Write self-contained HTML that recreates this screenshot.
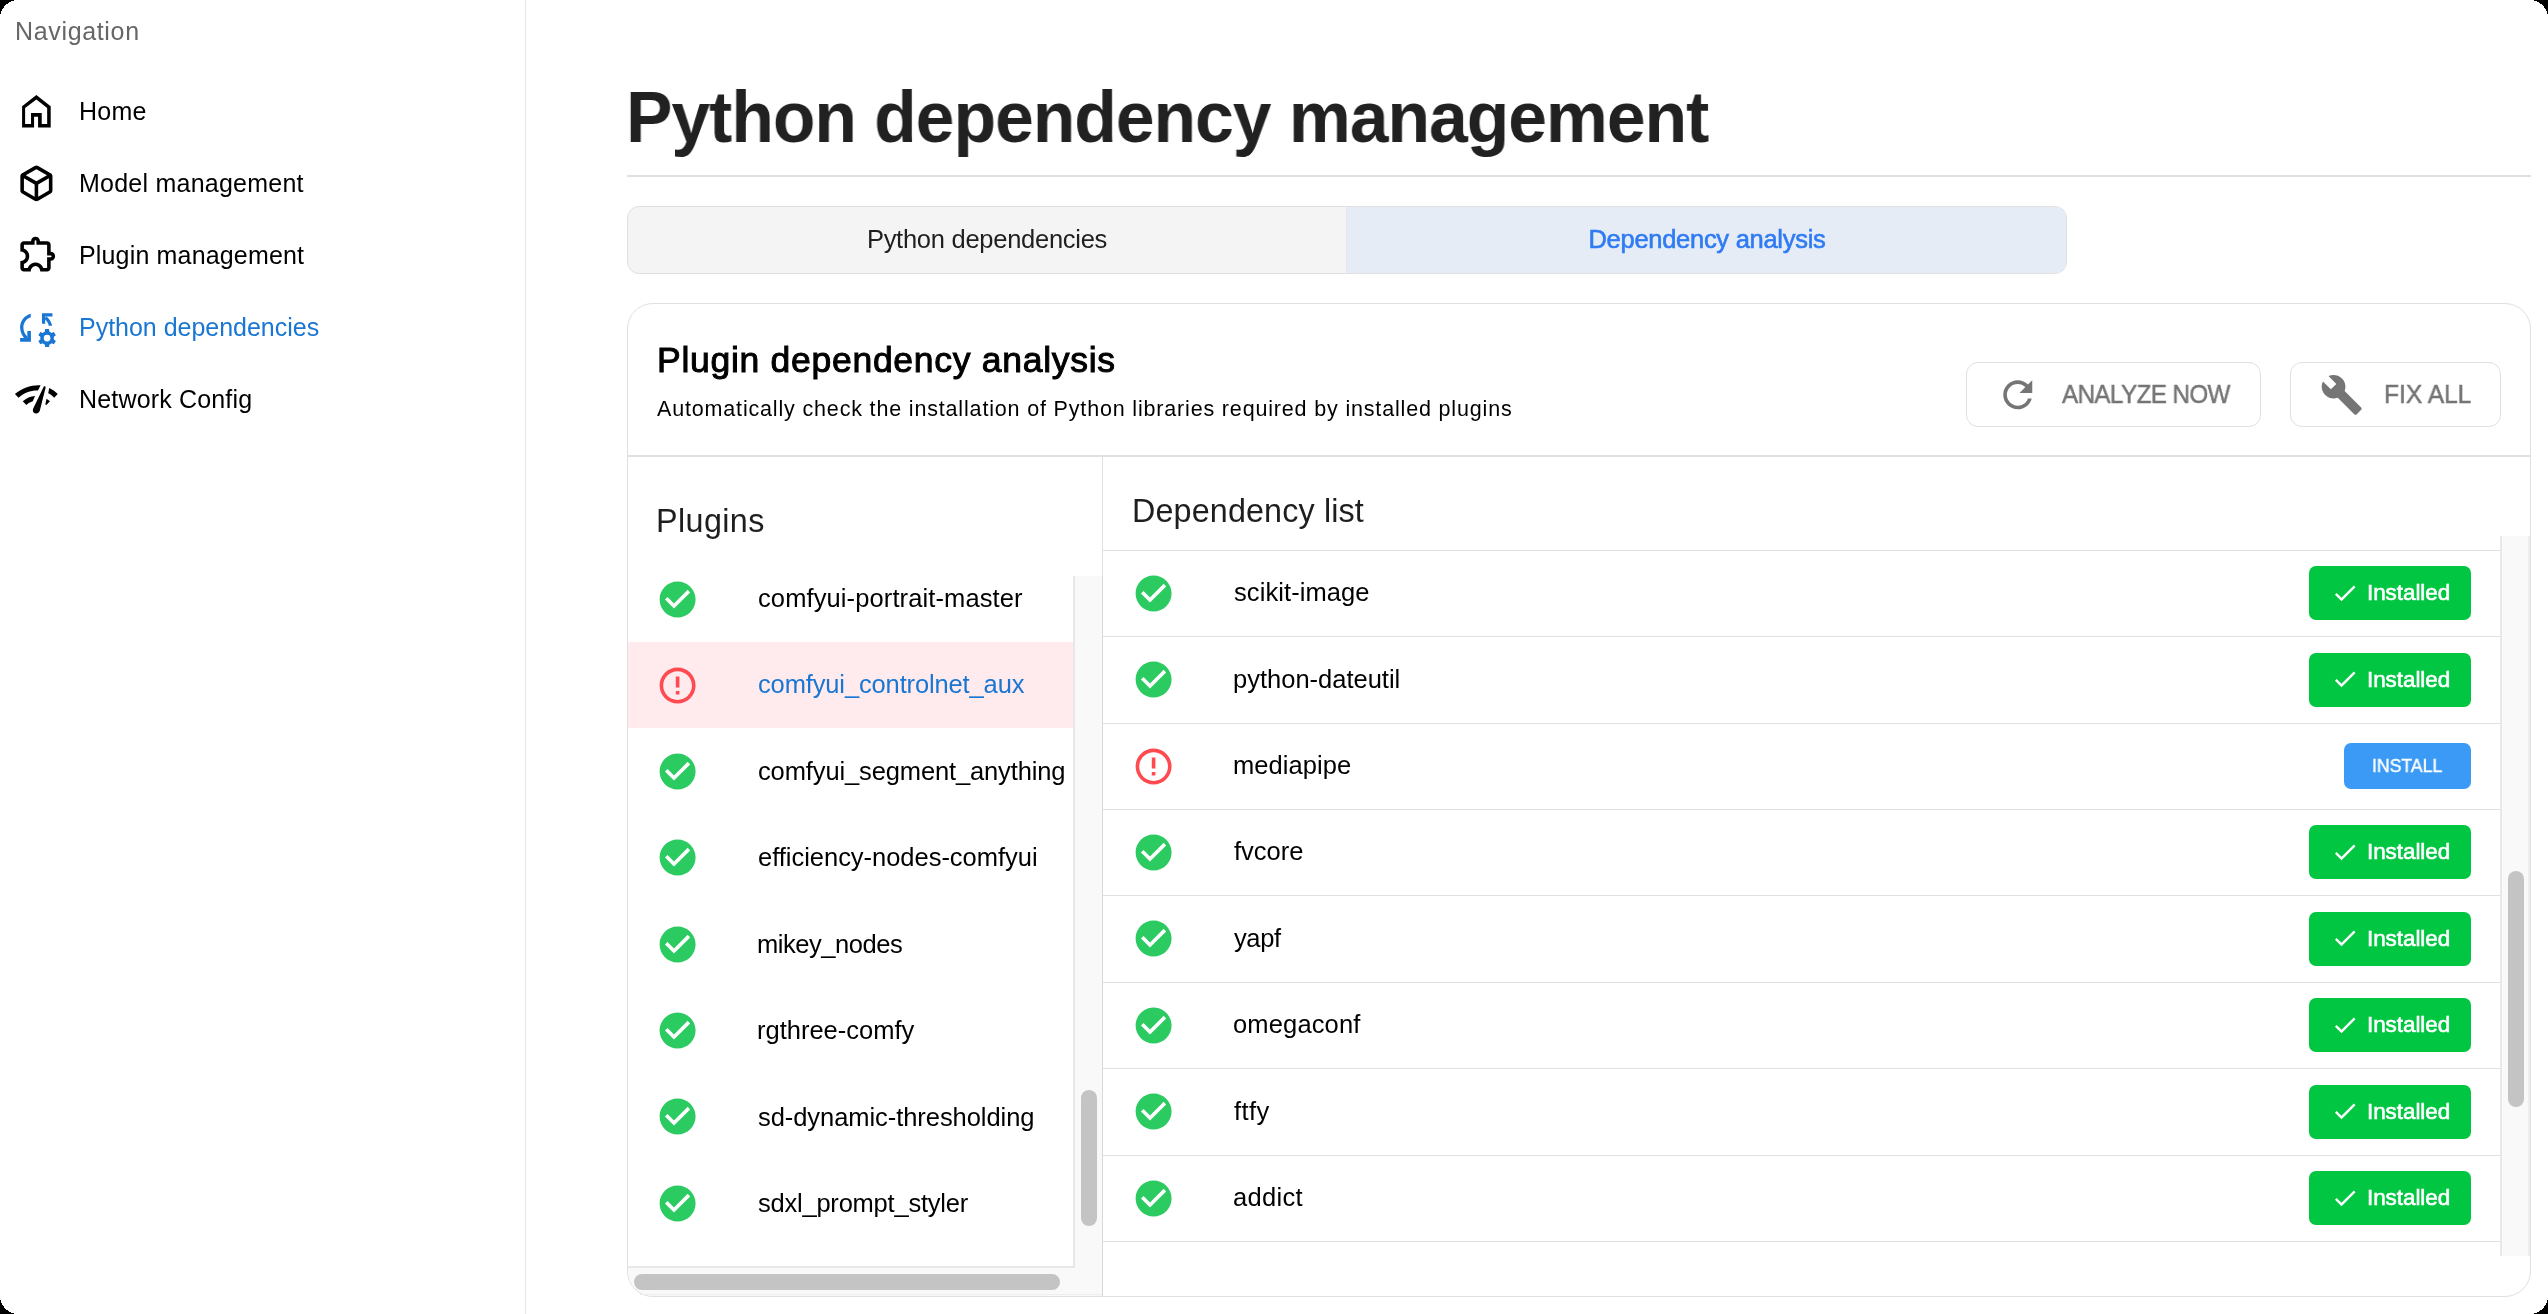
<!DOCTYPE html>
<html><head><meta charset="utf-8"><title>Python dependency management</title>
<style>
html,body{margin:0;padding:0;background:#000;width:2548px;height:1314px;overflow:hidden}
.app{position:absolute;left:0;top:0;width:2548px;height:1314px;background:#fff;overflow:hidden;font-family:"Liberation Sans",sans-serif}
.t{position:absolute;white-space:nowrap;font-family:"Liberation Sans",sans-serif;will-change:transform}
.r{position:absolute}
.i{position:absolute;overflow:visible}
</style></head><body><div class="app">
<div class="r" style="left:525px;top:0px;width:1px;height:1314px;background:#e5e5e5;"></div>
<div class="t" style="left:14.55px;top:18.64px;font-size:25px;line-height:25px;color:#666666;font-weight:400;letter-spacing:0.656px;">Navigation</div>
<svg class="i" style="left:0;top:0" width="60" height="140" viewBox="0 0 60 140"><path fill="#000" fill-rule="evenodd" d="M22.08,127.57 V106.3 L36.37,95.12 L50.69,106.3 V127.57 H38.06 V116.7 H34.07 V127.57 Z M25.11,124.05 H31.03 V113.02 H41.74 V124.05 H47.17 V107.9 L36.37,99.43 L25.11,107.9 Z"/></svg>
<div class="t" style="left:79.45px;top:98.74px;font-size:25px;line-height:25px;color:#000;font-weight:400;letter-spacing:0.267px;">Home</div>
<svg class="i" style="left:15.05px;top:161.80px" width="42.8" height="42.8" viewBox="0 -960 960 960"><path fill="#000" d="M440-183v-274L200-596v274l240 139Zm80 0 240-139v-274L520-457v274Zm-40-343 237-137-237-137-237 137 237 137ZM160-252q-19-11-29.5-29T120-321v-318q0-22 10.5-40t29.5-29l280-161q19-11 40-11t40 11l280 161q19 11 29.5 29t10.5 40v318q0 22-10.5 40T800-252L520-91q-19 11-40 11t-40-11L160-252Z"/></svg>
<div class="t" style="left:79.25px;top:170.84px;font-size:25px;line-height:25px;color:#000;font-weight:400;letter-spacing:0.240px;">Model management</div>
<svg class="i" style="left:14.94px;top:233.90px" width="42.8" height="42.8" viewBox="0 -960 960 960"><path fill="#000" d="M352-120H200q-33 0-56.5-23.5T120-200v-152q48 0 84-30.5t36-77.5q0-47-36-77.5T120-568v-152q0-33 23.5-56.5T200-800h160q0-42 29-71t71-29q42 0 71 29t29 71h160q33 0 56.5 23.5T800-720v160q42 0 71 29t29 71q0 42-29 71t-71 29v160q0 33-23.5 56.5T720-120H568q0-50-31.5-85T460-240q-45 0-76.5 35T352-120Zm-152-80h85q24-66 77-93t98-27q45 0 98 27t77 93h85v-240h80q8 0 14-6t6-14q0-8-6-14t-14-6h-80v-240H480v-80q0-8-6-14t-14-6q-8 0-14 6t-6 14v80H200v88q54 20 87 67t33 105q0 57-33 104t-87 68v88Z"/></svg>
<div class="t" style="left:79.25px;top:242.84px;font-size:25px;line-height:25px;color:#000;font-weight:400;letter-spacing:0.162px;">Plugin management</div>
<svg class="i" style="left:10px;top:305px" width="60" height="50" viewBox="0 0 1577 1314">
<g fill="#1976d2">
<path d="M545,320 C420,360 352,470 352,590 C352,690 395,770 470,840 L410,905 C320,820 265,710 265,590 C265,420 380,270 545,228 Z"/>
<path d="M265,870 H455 V685 H550 V965 H265 Z"/>
<path d="M840,215 H1115 V300 H925 V490 H840 Z"/>
<path d="M900,360 L960,300 C1040,370 1090,450 1108,545 H1020 C1005,470 965,410 900,360 Z"/>
<g transform="translate(975,870)">
<path fill-rule="evenodd" d="M-180,0 A180,180 0 1,0 180,0 A180,180 0 1,0 -180,0 Z M-88,0 A88,88 0 1,1 88,0 A88,88 0 1,1 -88,0 Z"/>
<path d="M-52,-236 H52 L60,-150 H-60 Z"/>
<path d="M-52,-236 H52 L60,-150 H-60 Z" transform="rotate(60)"/>
<path d="M-52,-236 H52 L60,-150 H-60 Z" transform="rotate(120)"/>
<path d="M-52,-236 H52 L60,-150 H-60 Z" transform="rotate(180)"/>
<path d="M-52,-236 H52 L60,-150 H-60 Z" transform="rotate(240)"/>
<path d="M-52,-236 H52 L60,-150 H-60 Z" transform="rotate(300)"/>
</g>
</g></svg>
<div class="t" style="left:79.25px;top:315.04px;font-size:25px;line-height:25px;color:#1976d2;font-weight:400;letter-spacing:-0.017px;">Python dependencies</div>
<svg class="i" style="left:10px;top:375px" width="60" height="50" viewBox="0 0 1577 1314">
<g fill="#000">
<path d="M130,500 C330,330 560,255 805,268 L735,405 C540,400 380,460 225,598 Z"/>
<path d="M335,690 C430,610 540,560 658,552 L598,690 C530,715 480,745 430,790 Z"/>
<path d="M895,290 L940,318 L785,935 C770,990 730,1015 690,1015 C630,1015 595,970 600,920 C602,900 610,880 620,862 Z"/>
<path d="M1030,340 C1110,375 1190,430 1255,500 L1160,595 C1110,545 1060,505 1005,480 Z"/>
<path d="M960,625 L1050,690 L955,790 L928,775 Z"/>
</g></svg>
<div class="t" style="left:79.25px;top:386.64px;font-size:25px;line-height:25px;color:#000;font-weight:400;letter-spacing:0.170px;">Network Config</div>
<div class="t" style="left:626.34px;top:81.13px;font-size:72.5px;line-height:72.5px;color:#212121;font-weight:700;letter-spacing:-1.030px;transform:scaleX(0.96);transform-origin:0 0;">Python dependency management</div>
<div class="r" style="left:627px;top:175px;width:1904px;height:2px;background:#e0e0e0;"></div>
<div class="r" style="left:627px;top:206px;width:1440px;height:68px;box-sizing:border-box;border:1px solid #e0e0e0;border-radius:12px;overflow:hidden;background:#f4f4f4"><div style="position:absolute;left:718px;top:0;width:1px;height:100%;background:#e6e6e6"></div><div style="position:absolute;left:719px;top:0;right:0;height:100%;background:#e5ecf6"></div></div>
<div class="t" style="left:587.30px;width:800px;text-align:center;top:227.01px;font-size:25.5px;line-height:25.5px;color:#1f1f1f;font-weight:400;letter-spacing:-0.267px;padding-left:-0.267px;box-sizing:border-box;">Python dependencies</div>
<div class="t" style="left:1306.90px;width:800px;text-align:center;top:227.01px;font-size:25.5px;line-height:25.5px;color:#2f7bf3;font-weight:400;letter-spacing:-0.278px;padding-left:-0.278px;box-sizing:border-box;-webkit-text-stroke:0.6px #2f7bf3;">Dependency analysis</div>
<div class="r" style="left:627px;top:303px;width:1904px;height:994px;box-sizing:border-box;border:1px solid #e0e0e0;border-radius:26px;background:#fff"></div>
<div class="t" style="left:656.59px;top:343.35px;font-size:35.5px;line-height:35.5px;color:#000;font-weight:400;letter-spacing:0.720px;-webkit-text-stroke:1.0px #000;">Plugin dependency analysis</div>
<div class="t" style="left:656.96px;top:398.70px;font-size:21.5px;line-height:21.5px;color:#000;font-weight:400;letter-spacing:0.832px;">Automatically check the installation of Python libraries required by installed plugins</div>
<div class="r" style="left:1966px;top:362px;width:295px;height:65px;box-sizing:border-box;border:1px solid #e0e0e0;border-radius:12px"></div>
<svg class="i" style="left:1995.75px;top:372.70px" width="43.5" height="43.5" viewBox="0 0 24 24"><path fill="#757575" d="M17.65 6.35C16.2 4.9 14.21 4 12 4c-4.42 0-7.99 3.58-7.99 8s3.57 8 7.99 8c3.73 0 6.84-2.55 7.73-6h-2.08c-.82 2.33-3.04 4-5.65 4-3.31 0-6-2.69-6-6s2.69-6 6-6c1.66 0 3.14.69 4.22 1.78L13 11h7V4l-2.35 2.35z"/></svg>
<div class="t" style="left:2061.89px;top:380.99px;font-size:26px;line-height:26px;color:#757575;font-weight:400;letter-spacing:-0.630px;-webkit-text-stroke:0.5px #757575;transform:scaleX(0.93);transform-origin:0 0;">ANALYZE NOW</div>
<div class="r" style="left:2290px;top:362px;width:211px;height:65px;box-sizing:border-box;border:1px solid #e0e0e0;border-radius:12px"></div>
<svg class="i" style="left:2320.00px;top:373.20px" width="43.5" height="43.5" viewBox="0 0 24 24"><path fill="#757575" d="M22.7 19l-9.1-9.1c.9-2.3.4-5-1.5-6.9-2-2-5-2.4-7.4-1.3L9 6 6 9 1.6 4.7C.4 7.1.9 10.1 2.9 12.1c1.9 1.9 4.6 2.4 6.9 1.5l9.1 9.1c.4.4 1 .4 1.4 0l2.3-2.3c.5-.4.5-1.1.1-1.4z"/></svg>
<div class="t" style="left:2384.21px;top:380.99px;font-size:26px;line-height:26px;color:#757575;font-weight:400;letter-spacing:-0.080px;-webkit-text-stroke:0.5px #757575;transform:scaleX(0.95);transform-origin:0 0;">FIX ALL</div>
<div class="r" style="left:627px;top:455px;width:1904px;height:2px;background:#e0e0e0;"></div>
<div class="r" style="left:1102px;top:457px;width:1px;height:839px;background:#e0e0e0;"></div>
<div class="t" style="left:656.35px;top:505.46px;font-size:32.3px;line-height:32.3px;color:#1e1e1e;font-weight:400;letter-spacing:0.400px;">Plugins</div>
<div class="r" style="left:1073px;top:576px;width:29px;height:720px;background:#f9f9f9;"></div>
<div class="r" style="left:1073px;top:576px;width:2px;height:692px;background:#e8e8e8;"></div>
<div class="r" style="left:628px;top:1268px;width:474px;height:28px;background:#f9f9f9;border-bottom-left-radius:26px;"></div>
<div class="r" style="left:628px;top:1266px;width:447px;height:2px;background:#e8e8e8;"></div>
<div class="r" style="left:640px;top:1294px;width:462px;height:1px;background:#eeeeee;"></div>
<div class="r" style="left:1102px;top:576px;width:1px;height:720px;background:#d8d8d8;"></div>
<div class="r" style="left:628px;top:642px;width:445px;height:86px;background:#ffebee;"></div>
<svg class="i" style="left:656.10px;top:577.60px" width="43.2" height="43.2" viewBox="0 0 24 24"><path fill="#2bcb62" d="M12 2C6.48 2 2 6.48 2 12s4.48 10 10 10 10-4.48 10-10S17.52 2 12 2zm-2 15l-5-5 1.41-1.41L10 14.17l7.59-7.59L19 8l-9 9z"/></svg>
<div class="t" style="left:757.72px;top:586.01px;font-size:25.5px;line-height:25.5px;color:#000;font-weight:400;letter-spacing:0.109px;">comfyui-portrait-master</div>
<svg class="i" style="left:656.10px;top:663.89px" width="43.2" height="43.2" viewBox="0 0 24 24"><path fill="#ff4a50" d="M11 15h2v2h-2zm0-8h2v6h-2zm.99-5C6.47 2 2 6.48 2 12s4.47 10 9.99 10C17.52 22 22 17.52 22 12S17.52 2 11.99 2zM12 20c-4.42 0-8-3.58-8-8s3.58-8 8-8 8 3.58 8 8-3.58 8-8 8z"/></svg>
<div class="t" style="left:757.72px;top:672.44px;font-size:25.5px;line-height:25.5px;color:#1976d2;font-weight:400;letter-spacing:-0.138px;">comfyui_controlnet_aux</div>
<svg class="i" style="left:656.10px;top:750.18px" width="43.2" height="43.2" viewBox="0 0 24 24"><path fill="#2bcb62" d="M12 2C6.48 2 2 6.48 2 12s4.48 10 10 10 10-4.48 10-10S17.52 2 12 2zm-2 15l-5-5 1.41-1.41L10 14.17l7.59-7.59L19 8l-9 9z"/></svg>
<div class="t" style="left:757.72px;top:758.87px;font-size:25.5px;line-height:25.5px;color:#000;font-weight:400;letter-spacing:-0.126px;">comfyui_segment_anything</div>
<svg class="i" style="left:656.10px;top:836.47px" width="43.2" height="43.2" viewBox="0 0 24 24"><path fill="#2bcb62" d="M12 2C6.48 2 2 6.48 2 12s4.48 10 10 10 10-4.48 10-10S17.52 2 12 2zm-2 15l-5-5 1.41-1.41L10 14.17l7.59-7.59L19 8l-9 9z"/></svg>
<div class="t" style="left:757.72px;top:845.30px;font-size:25.5px;line-height:25.5px;color:#000;font-weight:400;letter-spacing:-0.026px;">efficiency-nodes-comfyui</div>
<svg class="i" style="left:656.10px;top:922.76px" width="43.2" height="43.2" viewBox="0 0 24 24"><path fill="#2bcb62" d="M12 2C6.48 2 2 6.48 2 12s4.48 10 10 10 10-4.48 10-10S17.52 2 12 2zm-2 15l-5-5 1.41-1.41L10 14.17l7.59-7.59L19 8l-9 9z"/></svg>
<div class="t" style="left:757.11px;top:931.73px;font-size:25.5px;line-height:25.5px;color:#000;font-weight:400;letter-spacing:-0.460px;">mikey_nodes</div>
<svg class="i" style="left:656.10px;top:1009.05px" width="43.2" height="43.2" viewBox="0 0 24 24"><path fill="#2bcb62" d="M12 2C6.48 2 2 6.48 2 12s4.48 10 10 10 10-4.48 10-10S17.52 2 12 2zm-2 15l-5-5 1.41-1.41L10 14.17l7.59-7.59L19 8l-9 9z"/></svg>
<div class="t" style="left:757.11px;top:1018.16px;font-size:25.5px;line-height:25.5px;color:#000;font-weight:400;letter-spacing:0.000px;">rgthree-comfy</div>
<svg class="i" style="left:656.10px;top:1095.34px" width="43.2" height="43.2" viewBox="0 0 24 24"><path fill="#2bcb62" d="M12 2C6.48 2 2 6.48 2 12s4.48 10 10 10 10-4.48 10-10S17.52 2 12 2zm-2 15l-5-5 1.41-1.41L10 14.17l7.59-7.59L19 8l-9 9z"/></svg>
<div class="t" style="left:758.09px;top:1104.59px;font-size:25.5px;line-height:25.5px;color:#000;font-weight:400;letter-spacing:-0.059px;">sd-dynamic-thresholding</div>
<svg class="i" style="left:656.10px;top:1181.63px" width="43.2" height="43.2" viewBox="0 0 24 24"><path fill="#2bcb62" d="M12 2C6.48 2 2 6.48 2 12s4.48 10 10 10 10-4.48 10-10S17.52 2 12 2zm-2 15l-5-5 1.41-1.41L10 14.17l7.59-7.59L19 8l-9 9z"/></svg>
<div class="t" style="left:758.09px;top:1191.02px;font-size:25.5px;line-height:25.5px;color:#000;font-weight:400;letter-spacing:-0.224px;">sdxl_prompt_styler</div>
<div class="r" style="left:1081px;top:1090px;width:16px;height:136px;background:#c4c4c4;border-radius:8px;"></div>
<div class="r" style="left:634px;top:1274px;width:426px;height:16px;background:#c4c4c4;border-radius:8px;"></div>
<div class="t" style="left:1132.05px;top:494.56px;font-size:32.3px;line-height:32.3px;color:#1e1e1e;font-weight:400;letter-spacing:0.143px;">Dependency list</div>
<div class="r" style="left:2501px;top:536px;width:29px;height:720px;background:#f9f9f9;"></div>
<div class="r" style="left:2500px;top:536px;width:2px;height:720px;background:#e8e8e8;"></div>
<div class="r" style="left:2528px;top:536px;width:2px;height:720px;background:#eeeeee;"></div>
<div class="r" style="left:2508px;top:871px;width:16px;height:236px;background:#c4c4c4;border-radius:8px;"></div>
<div class="r" style="left:1103px;top:550px;width:1397px;height:1px;background:#e0e0e0;"></div>
<div class="r" style="left:1103px;top:636px;width:1397px;height:1px;background:#e0e0e0;"></div>
<div class="r" style="left:1103px;top:723px;width:1397px;height:1px;background:#e0e0e0;"></div>
<div class="r" style="left:1103px;top:809px;width:1397px;height:1px;background:#e0e0e0;"></div>
<div class="r" style="left:1103px;top:895px;width:1397px;height:1px;background:#e0e0e0;"></div>
<div class="r" style="left:1103px;top:982px;width:1397px;height:1px;background:#e0e0e0;"></div>
<div class="r" style="left:1103px;top:1068px;width:1397px;height:1px;background:#e0e0e0;"></div>
<div class="r" style="left:1103px;top:1155px;width:1397px;height:1px;background:#e0e0e0;"></div>
<div class="r" style="left:1103px;top:1241px;width:1397px;height:1px;background:#e0e0e0;"></div>
<svg class="i" style="left:1132.20px;top:571.70px" width="43.2" height="43.2" viewBox="0 0 24 24"><path fill="#2bcb62" d="M12 2C6.48 2 2 6.48 2 12s4.48 10 10 10 10-4.48 10-10S17.52 2 12 2zm-2 15l-5-5 1.41-1.41L10 14.17l7.59-7.59L19 8l-9 9z"/></svg>
<div class="r" style="left:2309px;top:566px;width:162px;height:54px;background:#00c642;border-radius:7px;"></div>
<svg class="i" style="left:2331.30px;top:578.60px" width="28" height="28" viewBox="0 0 24 24"><path fill="#fff" d="M9 16.17L4.83 12l-1.42 1.41L9 19 21 7l-1.41-1.41z"/></svg>
<div class="t" style="left:2366.72px;top:582.05px;font-size:22.5px;line-height:22.5px;color:#fff;font-weight:400;letter-spacing:-0.075px;-webkit-text-stroke:0.6px #fff;">Installed</div>
<div class="t" style="left:1233.79px;top:580.31px;font-size:25.5px;line-height:25.5px;color:#000;font-weight:400;letter-spacing:0.080px;">scikit-image</div>
<svg class="i" style="left:1132.20px;top:658.20px" width="43.2" height="43.2" viewBox="0 0 24 24"><path fill="#2bcb62" d="M12 2C6.48 2 2 6.48 2 12s4.48 10 10 10 10-4.48 10-10S17.52 2 12 2zm-2 15l-5-5 1.41-1.41L10 14.17l7.59-7.59L19 8l-9 9z"/></svg>
<div class="r" style="left:2309px;top:653px;width:162px;height:54px;background:#00c642;border-radius:7px;"></div>
<svg class="i" style="left:2331.30px;top:665.10px" width="28" height="28" viewBox="0 0 24 24"><path fill="#fff" d="M9 16.17L4.83 12l-1.42 1.41L9 19 21 7l-1.41-1.41z"/></svg>
<div class="t" style="left:2366.72px;top:668.55px;font-size:22.5px;line-height:22.5px;color:#fff;font-weight:400;letter-spacing:-0.075px;-webkit-text-stroke:0.6px #fff;">Installed</div>
<div class="t" style="left:1232.86px;top:666.81px;font-size:25.5px;line-height:25.5px;color:#000;font-weight:400;letter-spacing:0.000px;">python-dateutil</div>
<svg class="i" style="left:1132.20px;top:744.70px" width="43.2" height="43.2" viewBox="0 0 24 24"><path fill="#ff4a50" d="M11 15h2v2h-2zm0-8h2v6h-2zm.99-5C6.47 2 2 6.48 2 12s4.47 10 9.99 10C17.52 22 22 17.52 22 12S17.52 2 11.99 2zM12 20c-4.42 0-8-3.58-8-8s3.58-8 8-8 8 3.58 8 8-3.58 8-8 8z"/></svg>
<div class="r" style="left:2344px;top:743px;width:127px;height:46px;background:#3a9af5;border-radius:7px;"></div>
<div class="t" style="left:2371.96px;top:756.22px;font-size:19px;line-height:19px;color:#fff;font-weight:400;letter-spacing:-0.030px;-webkit-text-stroke:0.4px #fff;transform:scaleX(0.93);transform-origin:0 0;">INSTALL</div>
<div class="t" style="left:1232.81px;top:753.31px;font-size:25.5px;line-height:25.5px;color:#000;font-weight:400;letter-spacing:0.060px;">mediapipe</div>
<svg class="i" style="left:1132.20px;top:830.70px" width="43.2" height="43.2" viewBox="0 0 24 24"><path fill="#2bcb62" d="M12 2C6.48 2 2 6.48 2 12s4.48 10 10 10 10-4.48 10-10S17.52 2 12 2zm-2 15l-5-5 1.41-1.41L10 14.17l7.59-7.59L19 8l-9 9z"/></svg>
<div class="r" style="left:2309px;top:825px;width:162px;height:54px;background:#00c642;border-radius:7px;"></div>
<svg class="i" style="left:2331.30px;top:837.60px" width="28" height="28" viewBox="0 0 24 24"><path fill="#fff" d="M9 16.17L4.83 12l-1.42 1.41L9 19 21 7l-1.41-1.41z"/></svg>
<div class="t" style="left:2366.72px;top:841.05px;font-size:22.5px;line-height:22.5px;color:#fff;font-weight:400;letter-spacing:-0.075px;-webkit-text-stroke:0.6px #fff;">Installed</div>
<div class="t" style="left:1234.14px;top:839.31px;font-size:25.5px;line-height:25.5px;color:#000;font-weight:400;letter-spacing:0.000px;">fvcore</div>
<svg class="i" style="left:1132.20px;top:917.20px" width="43.2" height="43.2" viewBox="0 0 24 24"><path fill="#2bcb62" d="M12 2C6.48 2 2 6.48 2 12s4.48 10 10 10 10-4.48 10-10S17.52 2 12 2zm-2 15l-5-5 1.41-1.41L10 14.17l7.59-7.59L19 8l-9 9z"/></svg>
<div class="r" style="left:2309px;top:912px;width:162px;height:54px;background:#00c642;border-radius:7px;"></div>
<svg class="i" style="left:2331.30px;top:924.10px" width="28" height="28" viewBox="0 0 24 24"><path fill="#fff" d="M9 16.17L4.83 12l-1.42 1.41L9 19 21 7l-1.41-1.41z"/></svg>
<div class="t" style="left:2366.72px;top:927.55px;font-size:22.5px;line-height:22.5px;color:#fff;font-weight:400;letter-spacing:-0.075px;-webkit-text-stroke:0.6px #fff;">Installed</div>
<div class="t" style="left:1234.44px;top:925.81px;font-size:25.5px;line-height:25.5px;color:#000;font-weight:400;letter-spacing:-0.400px;">yapf</div>
<svg class="i" style="left:1132.20px;top:1003.70px" width="43.2" height="43.2" viewBox="0 0 24 24"><path fill="#2bcb62" d="M12 2C6.48 2 2 6.48 2 12s4.48 10 10 10 10-4.48 10-10S17.52 2 12 2zm-2 15l-5-5 1.41-1.41L10 14.17l7.59-7.59L19 8l-9 9z"/></svg>
<div class="r" style="left:2309px;top:998px;width:162px;height:54px;background:#00c642;border-radius:7px;"></div>
<svg class="i" style="left:2331.30px;top:1010.60px" width="28" height="28" viewBox="0 0 24 24"><path fill="#fff" d="M9 16.17L4.83 12l-1.42 1.41L9 19 21 7l-1.41-1.41z"/></svg>
<div class="t" style="left:2366.72px;top:1014.05px;font-size:22.5px;line-height:22.5px;color:#fff;font-weight:400;letter-spacing:-0.075px;-webkit-text-stroke:0.6px #fff;">Installed</div>
<div class="t" style="left:1233.43px;top:1012.31px;font-size:25.5px;line-height:25.5px;color:#000;font-weight:400;letter-spacing:0.150px;">omegaconf</div>
<svg class="i" style="left:1132.20px;top:1090.20px" width="43.2" height="43.2" viewBox="0 0 24 24"><path fill="#2bcb62" d="M12 2C6.48 2 2 6.48 2 12s4.48 10 10 10 10-4.48 10-10S17.52 2 12 2zm-2 15l-5-5 1.41-1.41L10 14.17l7.59-7.59L19 8l-9 9z"/></svg>
<div class="r" style="left:2309px;top:1085px;width:162px;height:54px;background:#00c642;border-radius:7px;"></div>
<svg class="i" style="left:2331.30px;top:1097.10px" width="28" height="28" viewBox="0 0 24 24"><path fill="#fff" d="M9 16.17L4.83 12l-1.42 1.41L9 19 21 7l-1.41-1.41z"/></svg>
<div class="t" style="left:2366.72px;top:1100.55px;font-size:22.5px;line-height:22.5px;color:#fff;font-weight:400;letter-spacing:-0.075px;-webkit-text-stroke:0.6px #fff;">Installed</div>
<div class="t" style="left:1234.14px;top:1098.81px;font-size:25.5px;line-height:25.5px;color:#000;font-weight:400;letter-spacing:0.400px;">ftfy</div>
<svg class="i" style="left:1132.20px;top:1176.70px" width="43.2" height="43.2" viewBox="0 0 24 24"><path fill="#2bcb62" d="M12 2C6.48 2 2 6.48 2 12s4.48 10 10 10 10-4.48 10-10S17.52 2 12 2zm-2 15l-5-5 1.41-1.41L10 14.17l7.59-7.59L19 8l-9 9z"/></svg>
<div class="r" style="left:2309px;top:1171px;width:162px;height:54px;background:#00c642;border-radius:7px;"></div>
<svg class="i" style="left:2331.30px;top:1183.60px" width="28" height="28" viewBox="0 0 24 24"><path fill="#fff" d="M9 16.17L4.83 12l-1.42 1.41L9 19 21 7l-1.41-1.41z"/></svg>
<div class="t" style="left:2366.72px;top:1187.05px;font-size:22.5px;line-height:22.5px;color:#fff;font-weight:400;letter-spacing:-0.075px;-webkit-text-stroke:0.6px #fff;">Installed</div>
<div class="t" style="left:1233.42px;top:1185.31px;font-size:25.5px;line-height:25.5px;color:#000;font-weight:400;letter-spacing:0.300px;">addict</div>
<svg class="i" style="left:0;top:0" width="2548" height="1314" viewBox="0 0 2548 1314" shape-rendering="crispEdges"><g fill="#000"><path d="M0,0h14v1h-14zM0,1h11v1h-11zM0,2h9v1h-9zM0,3h8v1h-8zM0,4h6v1h-6zM0,5h5v1h-5zM0,6h4v1h-4zM0,7h4v1h-4zM0,8h3v1h-3zM0,9h2v1h-2zM0,10h2v1h-2zM0,11h1v1h-1zM0,12h1v1h-1zM0,13h1v1h-1z"/><path d="M2534,0h14v1h-14zM2537,1h11v1h-11zM2539,2h9v1h-9zM2540,3h8v1h-8zM2542,4h6v1h-6zM2543,5h5v1h-5zM2544,6h4v1h-4zM2544,7h4v1h-4zM2545,8h3v1h-3zM2546,9h2v1h-2zM2546,10h2v1h-2zM2547,11h1v1h-1zM2547,12h1v1h-1zM2547,13h1v1h-1z"/><path d="M0,1313h14v1h-14zM0,1312h11v1h-11zM0,1311h9v1h-9zM0,1310h8v1h-8zM0,1309h6v1h-6zM0,1308h5v1h-5zM0,1307h4v1h-4zM0,1306h4v1h-4zM0,1305h3v1h-3zM0,1304h2v1h-2zM0,1303h2v1h-2zM0,1302h1v1h-1zM0,1301h1v1h-1zM0,1300h1v1h-1z"/><path d="M2534,1313h14v1h-14zM2537,1312h11v1h-11zM2539,1311h9v1h-9zM2540,1310h8v1h-8zM2542,1309h6v1h-6zM2543,1308h5v1h-5zM2544,1307h4v1h-4zM2544,1306h4v1h-4zM2545,1305h3v1h-3zM2546,1304h2v1h-2zM2546,1303h2v1h-2zM2547,1302h1v1h-1zM2547,1301h1v1h-1zM2547,1300h1v1h-1z"/></g></svg>
</div></body></html>
